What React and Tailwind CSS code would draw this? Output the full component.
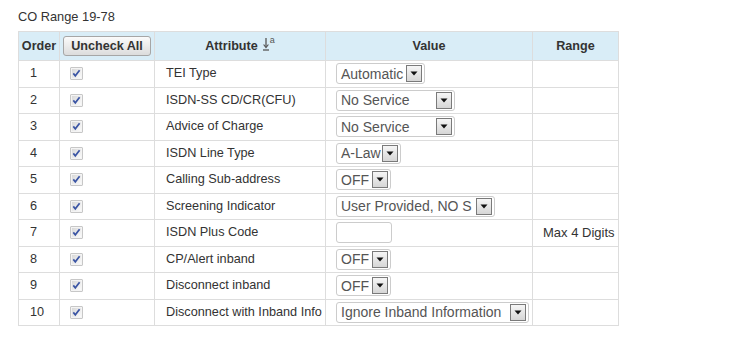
import React from "react";

const rows = [
  { n: 1, attr: "TEI Type", type: "select", value: "Automatic", w: 89 },
  { n: 2, attr: "ISDN-SS CD/CR(CFU)", type: "select", value: "No Service", w: 119 },
  { n: 3, attr: "Advice of Charge", type: "select", value: "No Service", w: 119 },
  { n: 4, attr: "ISDN Line Type", type: "select", value: "A-Law", w: 65 },
  { n: 5, attr: "Calling Sub-address", type: "select", value: "OFF", w: 55 },
  { n: 6, attr: "Screening Indicator", type: "select", value: "User Provided, NO S", w: 159 },
  { n: 7, attr: "ISDN Plus Code", type: "input", range: "Max 4 Digits" },
  { n: 8, attr: "CP/Alert inband", type: "select", value: "OFF", w: 55 },
  { n: 9, attr: "Disconnect inband", type: "select", value: "OFF", w: 55 },
  { n: 10, attr: "Disconnect with Inband Info", type: "select", value: "Ignore Inband Information", w: 193 },
];

function Check() {
  return (
    <svg width="13" height="13" viewBox="0 0 13 13" className="block">
      <defs>
        <linearGradient id="cbg" x1="0" y1="0" x2="1" y2="1">
          <stop offset="0" stopColor="#d8d8d8" />
          <stop offset="1" stopColor="#fbfbfb" />
        </linearGradient>
      </defs>
      <rect x="0.5" y="0.5" width="12" height="12" fill="#8f8f8f" />
      <rect x="1" y="1" width="11" height="11" fill="#f4f4f4" />
      <rect x="2" y="2" width="9" height="9" fill="url(#cbg)" />
      <path d="M3.3 6.4 L5.3 8.8 L9.6 3.3" fill="none" stroke="#3b55a4" strokeWidth="1.7" />
    </svg>
  );
}

function Select({ value, w }) {
  return (
    <div
      className="flex h-[21px] items-center justify-between rounded-[3px] border border-[#cccccc] bg-white pl-[4px] pr-[2px]"
      style={{ width: w }}
    >
      <span className="whitespace-nowrap text-[14px] leading-[16px] text-[#555555]">{value}</span>
      <span className="flex h-[17px] w-[16px] items-center justify-center border border-[#7a7a7a] bg-gradient-to-b from-[#f6f6f6] to-[#d6d6d6]">
        <svg width="8" height="5" viewBox="0 0 8 5" className="block">
          <path d="M0.5 0.5 L7.5 0.5 L4 4.5 Z" fill="#111" />
        </svg>
      </span>
    </div>
  );
}

export default function App() {
  return (
    <div className="bg-white pt-[9px] pl-[18px] pb-[35px] text-[#333333]" style={{ fontFamily: '"Liberation Sans", Arial, sans-serif' }}>
      <div className="text-[12.8px] leading-[15px]">CO Range 19-78</div>
      <table className="mt-[7px] w-[600px] table-fixed border-collapse border border-[#dddddd]">
        <colgroup>
          <col className="w-[41px]" />
          <col className="w-[95px]" />
          <col className="w-[171px]" />
          <col className="w-[207px]" />
          <col className="w-[86px]" />
        </colgroup>
        <thead>
          <tr className="h-[29px] bg-[#d9edf7] text-[12.6px] font-bold">
            <th className="border border-[#dddddd] p-0 text-center">Order</th>
            <th className="border border-[#dddddd] p-0">
              <div className="flex justify-center">
                <button className="h-[20px] w-[88px] rounded-[3px] border border-[#a6a6a6] bg-gradient-to-b from-[#fbfbfb] to-[#dcdcdc] text-[12.6px] font-bold leading-[14px] text-[#333333]">
                  Uncheck All
                </button>
              </div>
            </th>
            <th className="border border-[#dddddd] p-0 text-center">
              <span className="inline-flex items-start">
                Attribute
                <span className="ml-[5px] mt-[1px] inline-flex items-start">
                  <svg width="6" height="13" viewBox="0 0 6 13" className="block">
                    <path d="M3 0 L3 9" stroke="#555" strokeWidth="1.3" />
                    <path d="M0.6 6.5 L3 9.5 L5.4 6.5" fill="none" stroke="#555" strokeWidth="1.2" />
                    <path d="M0 12 L6 12" stroke="#555" strokeWidth="1.3" />
                  </svg>
                  <span className="ml-[1px] -mt-[3px] text-[9px] font-normal leading-[10px] text-[#555555]">a</span>
                </span>
              </span>
            </th>
            <th className="border border-[#dddddd] p-0 text-center">Value</th>
            <th className="border border-[#dddddd] p-0 text-center">Range</th>
          </tr>
        </thead>
        <tbody>
          {rows.map((r) => (
            <tr key={r.n} className="h-[26.5px] text-[12.7px]">
              <td className="border border-[#dddddd] py-0 pl-[11px] pr-0 align-middle">{r.n}</td>
              <td className="border border-[#dddddd] py-0 pl-[10px] pr-0 align-middle">
                <Check />
              </td>
              <td className="whitespace-nowrap border border-[#dddddd] py-0 pl-[11px] pr-0 align-middle">{r.attr}</td>
              <td className="border border-[#dddddd] py-0 pl-[10px] pr-0 align-middle">
                {r.type === "select" ? (
                  <Select value={r.value} w={r.w} />
                ) : (
                  <div className="h-[21px] w-[56px] rounded-[3px] border border-[#cccccc] bg-white" />
                )}
              </td>
              <td className="whitespace-nowrap border border-[#dddddd] py-0 pl-[10px] pr-0 align-middle text-[13px]">
                {r.range || ""}
              </td>
            </tr>
          ))}
        </tbody>
      </table>
    </div>
  );
}
